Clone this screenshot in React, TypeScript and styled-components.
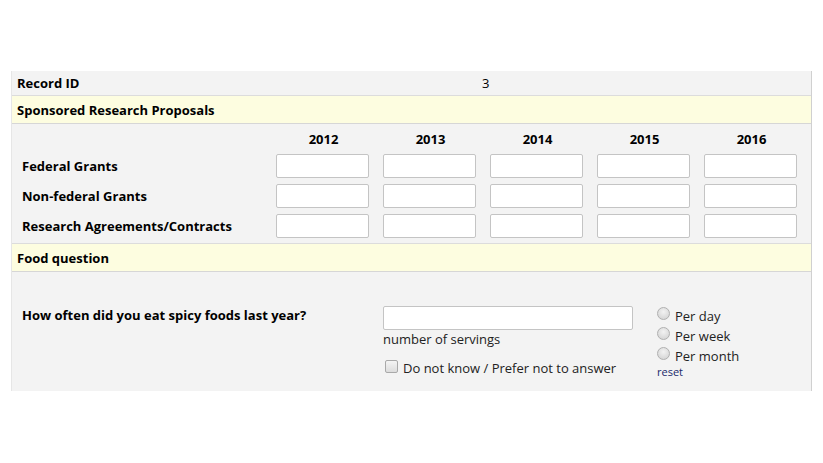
import React from 'react'
import styled, { createGlobalStyle } from 'styled-components'

const GlobalStyle = createGlobalStyle`
  html, body { margin: 0; padding: 0; background: #fff; }
  body { font-family: "Open Sans", "Liberation Sans", Arial, sans-serif; font-size: 13px; color: #000; }
`

const Page = styled.div`
  padding: 71px 0 0 11px;
`

const Form = styled.div`
  width: 799px;
  background: #f3f3f3;
  border-left: 1px solid #e6e6e6;
  border-right: 1px solid #d0d0d0;
`

const RecordRow = styled.div`
  display: flex;
  align-items: center;
  height: 24px;
  border-bottom: 1px solid #dcdcdc;
`

const RecordLabel = styled.div`
  width: 465px;
  padding-left: 5px;
  font-weight: 700;
`

const RecordValue = styled.div``

const SectionHeader = styled.div`
  display: flex;
  align-items: center;
  height: 27px;
  padding-left: 5px;
  background: #fdfde0;
  border-bottom: 1px solid #d6d6d6;
  font-weight: 700;
`

const Matrix = styled.div`
  display: grid;
  grid-template-columns: 258px repeat(5, 107px);
  grid-template-rows: 24px repeat(3, 30px);
  padding: 3px 0 2px 0;
  border-bottom: 1px solid #dcdcdc;
`

const YearHead = styled.div`
  display: flex;
  align-items: center;
  justify-content: center;
  font-weight: 700;
`

const Blank = styled.div``

const RowLabel = styled.div`
  display: flex;
  align-items: center;
  padding-left: 10px;
  font-weight: 700;
`

const Cell = styled.div`
  display: flex;
  align-items: center;
  padding-left: 6px;
`

const TextBox = styled.input<{ $w: number }>`
  box-sizing: border-box;
  width: ${p => p.$w}px;
  height: 24px;
  border: 1px solid #c4c4c4;
  border-radius: 2px;
  background: #fff;
  margin: 0;
  padding: 2px 4px;
`

const Question = styled.div`
  display: flex;
  padding: 34px 0 11px 0;
  min-height: 74px;
`

const QuestionText = styled.div`
  width: 361px;
  padding: 0 0 0 10px;
  font-weight: 700;
`

const AnswerCol = styled.div`
  width: 274px;
  display: flex;
  flex-direction: column;
`

const Note = styled.div`
  margin-top: 0;
  color: #222;
`

const CheckLine = styled.label`
  display: flex;
  align-items: center;
  gap: 5px;
  margin-top: 11px;
  color: #222;
`

const Box = styled.span`
  width: 11px;
  height: 11px;
  border: 1px solid #a9a9a9;
  border-radius: 2px;
  background: linear-gradient(#f4f4f4, #dcdcdc);
  margin-left: 2px;
  margin-top: -3px;
`

const Choices = styled.div`
  display: flex;
  flex-direction: column;
`

const Choice = styled.label`
  display: flex;
  align-items: center;
  gap: 5px;
  height: 20px;
  color: #222;
`

const Radio = styled.span`
  width: 11px;
  height: 11px;
  border-radius: 50%;
  border: 1px solid #b0b0b0;
  background: radial-gradient(circle at 50% 35%, #f2f2f2, #cfcfcf);
  margin-top: -5px;
`

const Reset = styled.a`
  font-size: 11px;
  color: #1a2a6c;
  text-decoration: none;
  margin-top: -2px;
`

const years = ['2012', '2013', '2014', '2015', '2016']
const rows = ['Federal Grants', 'Non-federal Grants', 'Research Agreements/Contracts']

export default function App() {
  return (
    <>
      <GlobalStyle />
      <Page>
        <Form>
          <RecordRow>
            <RecordLabel>Record ID</RecordLabel>
            <RecordValue>3</RecordValue>
          </RecordRow>
          <SectionHeader>Sponsored Research Proposals</SectionHeader>
          <Matrix>
            <Blank />
            {years.map(y => (
              <YearHead key={y}>{y}</YearHead>
            ))}
            {rows.map(r => (
              <React.Fragment key={r}>
                <RowLabel>{r}</RowLabel>
                {years.map(y => (
                  <Cell key={y}>
                    <TextBox $w={93} />
                  </Cell>
                ))}
              </React.Fragment>
            ))}
          </Matrix>
          <SectionHeader>Food question</SectionHeader>
          <Question>
            <QuestionText>How often did you eat spicy foods last year?</QuestionText>
            <AnswerCol>
              <TextBox $w={250} />
              <Note>number of servings</Note>
              <CheckLine>
                <Box />
                Do not know / Prefer not to answer
              </CheckLine>
            </AnswerCol>
            <Choices>
              <Choice><Radio />Per day</Choice>
              <Choice><Radio />Per week</Choice>
              <Choice><Radio />Per month</Choice>
              <Reset href="#">reset</Reset>
            </Choices>
          </Question>
        </Form>
      </Page>
    </>
  )
}
